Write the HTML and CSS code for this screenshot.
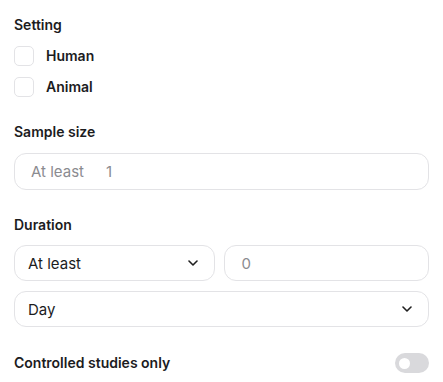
FILE: index.html
```html
<!DOCTYPE html>
<html lang="en">
<head>
    <meta charset="UTF-8">
    <meta name="viewport" content="width=device-width, initial-scale=1.0">
    <title>Filters</title>
    <link rel="stylesheet" href="styles.css">
</head>
<body>
<div class="filters">
    <div class="filter-group">
        <h3 class="filter-title">Setting</h3>
        <div class="check-list">
            <label class="check-row"><span class="check-box"></span>Human</label>
            <label class="check-row"><span class="check-box"></span>Animal</label>
        </div>
    </div>

    <div class="filter-group">
        <h3 class="filter-title">Sample size</h3>
        <div class="field field-prefixed">
            <span class="field-prefix">At least</span>
            <span class="field-placeholder">1</span>
        </div>
    </div>

    <div class="filter-group filter-group-last">
        <h3 class="filter-title">Duration</h3>
        <div class="field-row">
            <div class="field field-select">
                <span>At least</span>
                <svg class="chevron" width="10" height="6" viewBox="0 0 10 6"><path d="M1 1l4 4 4-4" fill="none" stroke="#1f1f1f" stroke-width="1.6" stroke-linecap="round" stroke-linejoin="round"/></svg>
            </div>
            <div class="field field-number">
                <span class="field-placeholder">0</span>
            </div>
        </div>
        <div class="field field-select">
            <span>Day</span>
            <svg class="chevron" width="10" height="6" viewBox="0 0 10 6"><path d="M1 1l4 4 4-4" fill="none" stroke="#1f1f1f" stroke-width="1.6" stroke-linecap="round" stroke-linejoin="round"/></svg>
        </div>
    </div>

    <div class="toggle-row">
        <span class="filter-title">Controlled studies only</span>
        <span class="toggle"><span class="toggle-knob"></span></span>
    </div>
</div>
</body>
</html>
```

FILE: styles.css
```css
:root {
    --text: #1c1c1e;
    --muted: #8b8b90;
    --border: #e3e3e6;
    --radius: 12px;
}

* {
    margin: 0;
    padding: 0;
    box-sizing: border-box;
    font-family: Inter, 'Noto Sans', sans-serif;
}

body {
    background: #fff;
    color: var(--text);
    padding: 15px 14px;
}

.filter-group {
    margin-bottom: 25px;
}

.filter-group-last {
    margin-bottom: 26px;
}

.filter-title {
    display: block;
    font-size: 14px;
    line-height: 20px;
    font-weight: 600;
    color: var(--text);
}

.filter-group .filter-title {
    margin-bottom: 11px;
}

/* Checkboxes */
.check-list {
    display: flex;
    flex-direction: column;
    gap: 11px;
}

.check-row {
    display: flex;
    align-items: center;
    gap: 12px;
    font-size: 14px;
    line-height: 20px;
    font-weight: 600;
}

.check-box {
    width: 20px;
    height: 20px;
    border: 1px solid var(--border);
    border-radius: 5px;
}

/* Fields */
.field {
    display: flex;
    align-items: center;
    height: 37px;
    border: 1px solid var(--border);
    border-radius: var(--radius);
    font-size: 15px;
}

.field-prefixed {
    padding: 0 16px;
    gap: 22px;
}

.field-prefix,
.field-placeholder {
    color: var(--muted);
}

.field-row {
    display: flex;
    gap: 9px;
    margin-top: -1px;
    margin-bottom: 10px;
}

.field-row .field {
    flex: 1;
    height: 36px;
}

.field-select {
    justify-content: space-between;
    height: 36px;
    padding: 0 16px 0 13px;
    color: var(--text);
}

.field-number {
    padding: 0 17px;
}

.chevron {
    display: block;
}

/* Toggle */
.toggle-row {
    display: flex;
    align-items: center;
    justify-content: space-between;
}

.toggle {
    width: 34px;
    height: 20px;
    border-radius: 10px;
    background: #d9d9dc;
    display: flex;
    align-items: center;
    padding: 0 4px;
}

.toggle-knob {
    width: 11px;
    height: 11px;
    border-radius: 50%;
    background: #fff;
}
```
